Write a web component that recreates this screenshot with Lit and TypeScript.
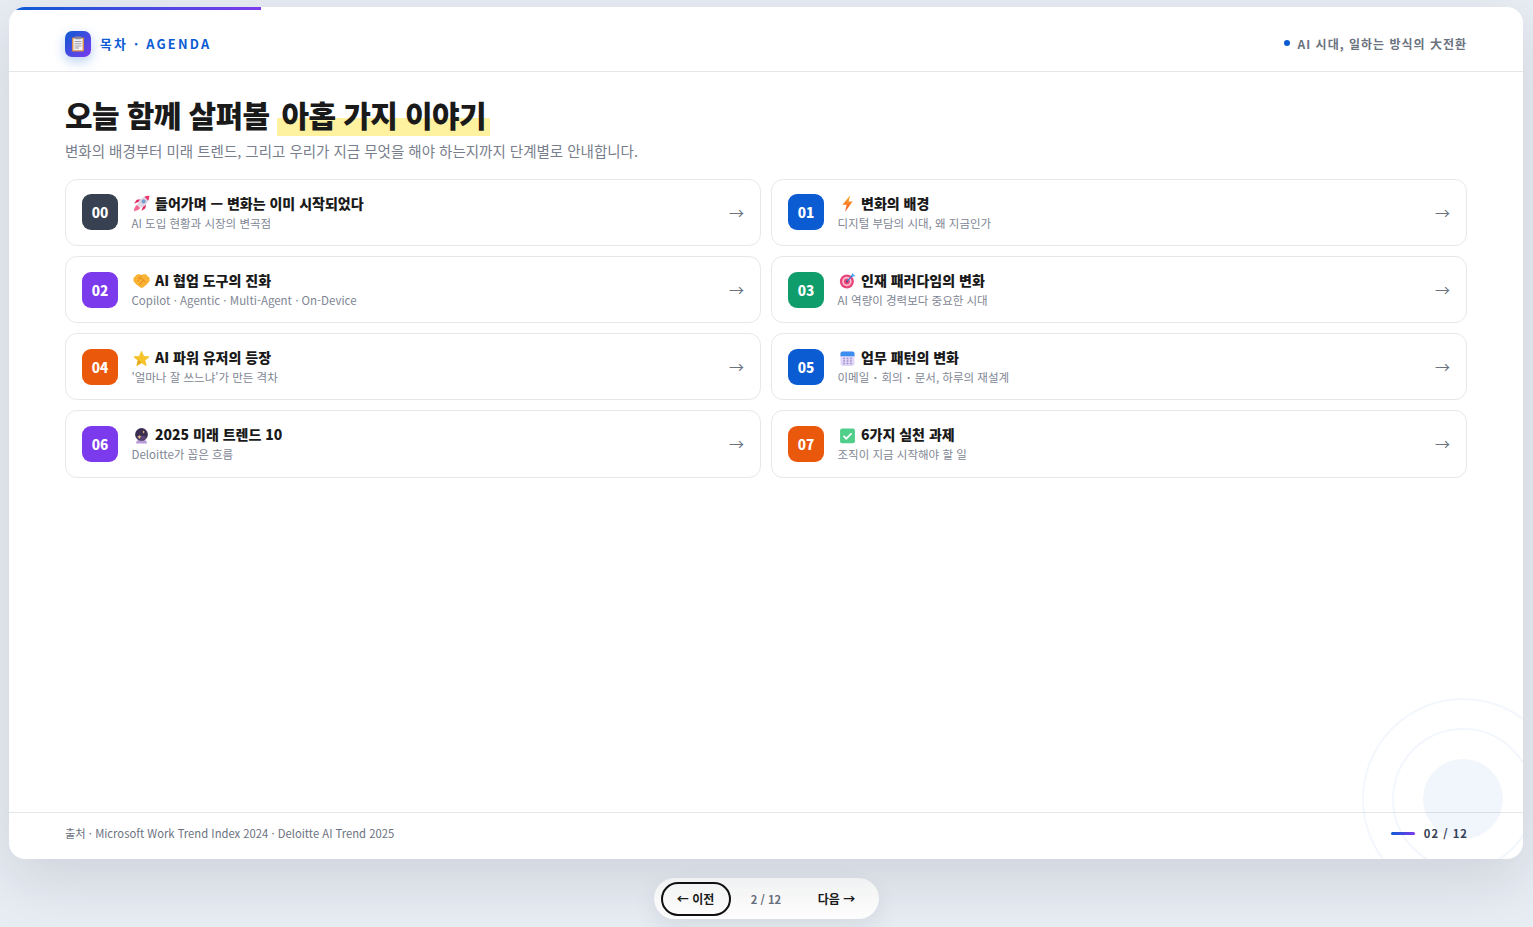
import { css, html, LitElement, svg } from "lit";
import { customElement } from "lit/decorators.js";

const icons = {
  rocket: svg`
    <path d="M5 6.6 1 8l2.6-3.6L7.4 4z" fill="#e0245e"/>
    <path d="M9.4 11 8 15l3.6-2.6.6-3.8z" fill="#e0245e"/>
    <path d="M3.8 9.2 6.8 12.2C5.6 14 3 15 .8 15.2 1 13 2 10.4 3.8 9.2z" fill="#f7678f"/>
    <path d="M15.4.6C11 .6 7.4 2.8 5.2 6.4L4 8.6l3.4 3.4 2.2-1.2C13.2 8.6 15.4 5 15.4.6z" fill="#dcd6e6"/>
    <path d="M15.4.6c-1.7 0-3.3.4-4.7 1.1l3.6 3.6c.7-1.4 1.1-3 1.1-4.7z" fill="#f0386b"/>
    <circle cx="10" cy="6" r="1.6" fill="#5aa9ea" stroke="#8f86a3" stroke-width=".7"/>`,
  bolt: svg`
    <defs><linearGradient id="bolt" x1="0" y1="0" x2="0" y2="1"><stop offset="0" stop-color="#ffb02e"/><stop offset="1" stop-color="#f4511e"/></linearGradient></defs>
    <path d="M10.6.2 3.2 9.2h4L5.8 15.8l7-9.6H9z" fill="url(#bolt)"/>`,
  hands: svg`
    <path d="M.4 5.6 4 2.2h2.6L8 3.2l1.4-1H12l3.6 3.4v3l-3 3.4-3.4 2.8H7.4l-4-2.8-3-3.4z" fill="#f9b233"/>
    <path d="M8 3.2 5.2 6q1.4 1.2 3-.2l3.6 3.8M9.8 7.8l-2.2 2.4M8 10l-1.6 1.8M5.6 9.2l-1-1" fill="none" stroke="#e2861a" stroke-width=".9" stroke-linecap="round"/>`,
  target: svg`
    <circle cx="7.4" cy="8.9" r="6.6" fill="#e8457a"/>
    <circle cx="7.4" cy="8.9" r="4.4" fill="#f8c3d2"/>
    <circle cx="7.4" cy="8.9" r="2.8" fill="#e8457a"/>
    <circle cx="7.4" cy="8.9" r="1" fill="#7a2f55"/>
    <path d="M7.4 8.9 13 3.2" stroke="#2f7fd6" stroke-width="1.1"/>
    <path d="M11.4 3.4 13 .8l.6 1.8 1.9.5-2.6 1.7z" fill="#42a5f5"/>`,
  star: svg`
    <path d="M8 1.2 10 6l5.1.4-3.9 3.3 1.2 5L8 12l-4.4 2.7 1.2-5L.9 6.4 6 6z" fill="#f6c329" stroke="#f6c329" stroke-width=".8" stroke-linejoin="round"/>
    <path d="M8 12l-4.4 2.7 1.2-5L.9 6.4c3 1.6 6 4.5 7.1 5.6z" fill="#e3a71d"/>`,
  calendar: svg`
    <rect x="1.4" y="1.4" width="13.2" height="13.6" rx="2" fill="#e2d7f8"/>
    <path d="M1.4 5.8V3.4a2 2 0 0 1 2-2h9.2a2 2 0 0 1 2 2v2.4z" fill="#3b8df0"/>
    <path d="M4 7.2h1.6v1.4H4zm3.2 0h1.6v1.4H7.2zm3.2 0H12v1.4h-1.6zM4 9.6h1.6V11H4zm3.2 0h1.6V11H7.2zm3.2 0H12V11h-1.6zM4 12h1.6v1.4H4zm3.2 0h1.6v1.4H7.2zm3.2 0H12v1.4h-1.6z" fill="#9c90ca"/>`,
  ball: svg`
    <path d="M4 12.4h8l1.2 2.4q.2.7-.6.7H3.4q-.8 0-.6-.7z" fill="#b79ad8"/>
    <circle cx="8" cy="7" r="6" fill="#3a2d50"/>
    <path d="M3.2 9.5A5.6 5.6 0 0 0 12.8 9.5Q8 6.8 3.2 9.5z" fill="#5a4478"/>
    <path d="M6 7.2l.6 1.4 1.4.6-1.4.6L6 11.2l-.6-1.4L4 9.2l1.4-.6zM10 3.4l.4.9.9.4-.9.4-.4.9-.4-.9-.9-.4.9-.4z" fill="#f3c77a"/>`,
  check: svg`
    <rect x="1" y="1.4" width="14" height="14" rx="2" fill="#4fcf8a"/>
    <path d="M4.2 8.4l2.6 2.6 5-5" fill="none" stroke="#fff" stroke-width="1.6"/>`,
};

const items = [
  ["00", "#374151", "rocket", "들어가며 — 변화는 이미 시작되었다", "AI 도입 현황과 시장의 변곡점"],
  ["01", "#0b5bd3", "bolt", "변화의 배경", "디지털 부담의 시대, 왜 지금인가"],
  ["02", "#7c3aed", "hands", "AI 협업 도구의 진화", "Copilot · Agentic · Multi-Agent · On-Device"],
  ["03", "#0f9d6b", "target", "인재 패러다임의 변화", "AI 역량이 경력보다 중요한 시대"],
  ["04", "#ea580c", "star", "AI 파워 유저의 등장", "'얼마나 잘 쓰느냐'가 만든 격차"],
  ["05", "#0b5bd3", "calendar", "업무 패턴의 변화", "이메일 ･ 회의 ･ 문서, 하루의 재설계"],
  ["06", "#7c3aed", "ball", "2025 미래 트렌드 10", "Deloitte가 꼽은 흐름"],
  ["07", "#ea580c", "check", "6가지 실천 과제", "조직이 지금 시작해야 할 일"],
];

@customElement("app-root")
export default class AppRoot extends LitElement {
  static styles = css`
    :host {
      display: block;
      height: 927px;
      overflow: hidden;
      background: #e8ecf3;
      font-family: "Noto Sans CJK KR", "Noto Sans", sans-serif;
    }

    .page {
      display: flex;
      flex-direction: column;
      align-items: center;
      padding: 7px 10px 0 9px;
    }

    .slide {
      position: relative;
      box-sizing: border-box;
      width: 100%;
      height: 852px;
      display: flex;
      flex-direction: column;
      overflow: hidden;
      background: #fff;
      border-radius: 16px;
      box-shadow: 0 20px 60px rgba(15, 23, 42, 0.12);
    }

    .progress {
      position: absolute;
      top: 0;
      left: 0;
      width: 252px;
      height: 3px;
      background: linear-gradient(90deg, #0b5bd3, #7c3aed);
    }

    .circle {
      position: absolute;
      border-radius: 50%;
      box-sizing: border-box;
      border: 2px solid rgba(11, 91, 211, 0.05);
    }

    .c1 {
      left: 1353px;
      top: 691px;
      width: 202px;
      height: 202px;
    }

    .c2 {
      left: 1383px;
      top: 721px;
      width: 142px;
      height: 142px;
    }

    .c3 {
      left: 1414px;
      top: 752px;
      width: 80px;
      height: 80px;
      border: none;
      background: rgba(11, 91, 211, 0.06);
    }

    header {
      height: 65px;
      box-sizing: border-box;
      display: flex;
      align-items: center;
      justify-content: space-between;
      padding: 10px 56px 0;
      border-bottom: 1px solid #e5e7eb;
    }

    .brand {
      display: flex;
      align-items: center;
      gap: 9px;
    }

    .logo {
      width: 26px;
      height: 26px;
      display: flex;
      align-items: center;
      justify-content: center;
      border-radius: 7px;
      background: linear-gradient(135deg, #0b5bd3, #7c3aed);
      box-shadow: 0 4px 12px rgba(11, 91, 211, 0.3);
    }

    .logo svg {
      width: 16px;
      height: 16px;
    }

    .brand-name {
      margin-top: -2px;
      font-size: 12.8px;
      font-weight: 700;
      letter-spacing: 2.25px;
      color: #0b5bd3;
    }

    .tag {
      display: flex;
      align-items: center;
      gap: 8px;
      margin-top: -2px;
      font-size: 12px;
      font-weight: 700;
      letter-spacing: 1px;
      color: #6b7280;
    }

    .dot {
      width: 6px;
      height: 6px;
      border-radius: 50%;
      background: #0b5bd3;
    }

    main {
      flex: 1;
      padding: 20px 56px 0;
    }

    h1 {
      margin: 0;
      font-size: 30px;
      line-height: 44px;
      font-weight: 800;
      color: #1a1a1a;
      letter-spacing: -0.6px;
    }

    .mark {
      padding: 0 4px;
      background: linear-gradient(transparent 60%, #fef1a0 60%);
    }

    .sub {
      margin: 4px 0 16.8px;
      font-size: 14.5px;
      line-height: 22px;
      color: #777e8c;
    }

    .grid {
      display: grid;
      grid-template-columns: 1fr 1fr;
      gap: 10px;
    }

    .card {
      height: 67.2px;
      box-sizing: border-box;
      display: flex;
      align-items: center;
      gap: 13.5px;
      padding: 0 16px;
      background: #fff;
      border: 1px solid #e5e7eb;
      border-radius: 12px;
    }

    .num {
      width: 36px;
      height: 36px;
      flex: none;
      display: flex;
      align-items: center;
      justify-content: center;
      border-radius: 9px;
      font-size: 13.6px;
      font-weight: 800;
      color: #fff;
    }

    .body {
      flex: 1;
      min-width: 0;
      margin-top: -0.4px;
    }

    .title {
      display: flex;
      align-items: center;
      gap: 5.5px;
      margin-bottom: 1px;
      font-size: 14px;
      line-height: 20px;
      font-weight: 800;
      color: #1a1a1a;
    }

    .title svg {
      width: 17px;
      height: 17px;
      margin: 2px 0 0 1px;
    }

    .desc {
      font-size: 11.5px;
      line-height: 18px;
      color: #808694;
    }

    .arrow {
      font-size: 15px;
      line-height: 20px;
      margin-top: 0.4px;
      color: #6b7280;
    }

    footer {
      height: 47px;
      box-sizing: border-box;
      display: flex;
      align-items: center;
      justify-content: space-between;
      padding: 0 56px 6px;
      border-top: 1px solid #e5e7eb;
      font-size: 11.25px;
      color: #6b7280;
    }

    .count {
      display: flex;
      align-items: center;
      gap: 9px;
      margin-right: -1px;
      font-weight: 700;
      letter-spacing: 1px;
      color: #374151;
    }

    .line {
      width: 24px;
      height: 3px;
      border-radius: 2px;
      background: linear-gradient(90deg, #0b5bd3, #7c3aed);
    }

    nav {
      display: flex;
      align-items: center;
      height: 41px;
      margin-top: 19px;
      padding: 0 7px;
      background: #fff;
      border-radius: 21px;
      box-shadow: 0 8px 24px rgba(15, 23, 42, 0.08);
      font-size: 12px;
    }

    .btn {
      width: 70px;
      height: 34px;
      box-sizing: border-box;
      display: flex;
      align-items: center;
      justify-content: center;
      border-radius: 17px;
      font-weight: 700;
      color: #1a1a1a;
    }

    .btn.active {
      border: 2px solid #111;
    }

    .pos {
      width: 71px;
      text-align: center;
      font-size: 11.2px;
      font-weight: 700;
      color: #6b7280;
    }
  `;

  render() {
    return html`
      <div class="page" lang="ko">
        <div class="slide">
          <div class="progress"></div>
          <div class="circle c1"></div>
          <div class="circle c2"></div>
          <div class="circle c3"></div>
          <header>
            <div class="brand">
              <div class="logo">
                <svg viewBox="0 0 16 16">
                  <rect x="2" y="1.4" width="12" height="14" rx="1" fill="#d98e4a"/>
                  <rect x="3.4" y="2.6" width="9.2" height="11.6" fill="#f4f2f5"/>
                  <rect x="5" y=".6" width="6" height="2.6" rx=".6" fill="#8d8a99"/>
                  <path d="M4.6 5h6.8v1H4.6zm0 2.2h6.8v1H4.6zm0 2.2h6.8v1H4.6zm0 2.2h4.4v1H4.6z" fill="#9a98a6"/>
                </svg>
              </div>
              <div class="brand-name">목차 · AGENDA</div>
            </div>
            <div class="tag"><span class="dot"></span>AI 시대, 일하는 방식의 大전환</div>
          </header>
          <main>
            <h1>오늘 함께 살펴볼 <span class="mark">아홉 가지 이야기</span></h1>
            <p class="sub">변화의 배경부터 미래 트렌드, 그리고 우리가 지금 무엇을 해야 하는지까지 단계별로 안내합니다.</p>
            <div class="grid">${items.map((it) => this.card(it))}</div>
          </main>
          <footer>
            <div>출처 · Microsoft Work Trend Index 2024 · Deloitte AI Trend 2025</div>
            <div class="count"><span class="line"></span>02 / 12</div>
          </footer>
        </div>
        <nav>
          <div class="btn active">← 이전</div>
          <div class="pos">2 / 12</div>
          <div class="btn">다음 →</div>
        </nav>
      </div>
    `;
  }

  card([num, color, icon, title, desc]: string[]) {
    return html`
      <div class="card">
        <div class="num" style="background:${color}">${num}</div>
        <div class="body">
          <div class="title"><svg viewBox="0 0 16 16">${icons[icon as keyof typeof icons]}</svg>${title}</div>
          <div class="desc">${desc}</div>
        </div>
        <div class="arrow">→</div>
      </div>
    `;
  }
}
